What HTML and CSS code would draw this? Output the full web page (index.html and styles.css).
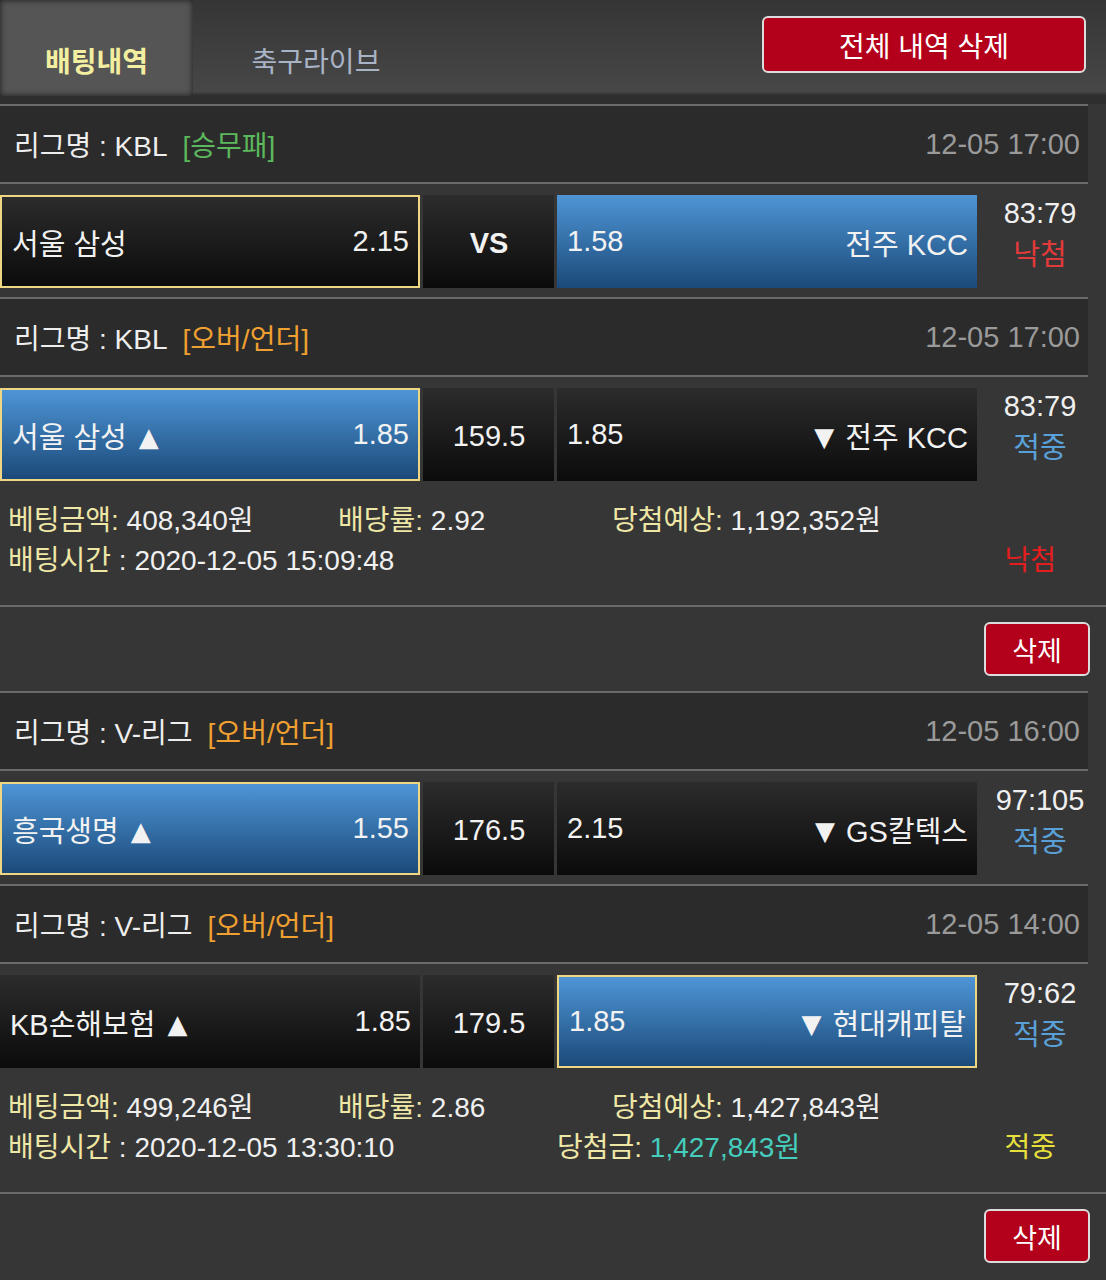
FILE: index.html
```html
<!doctype html>
<html lang="ko">
   <head>
      <meta charset="UTF-8" />
      <meta name="viewport" content="width=device-width, initial-scale=1.0" />
      <title>배팅내역</title>
      <link rel="stylesheet" href="styles.css">
   </head>
   <body>
      <div class="top">
         <div class="tabs">
            <div class="tab active">배팅내역</div>
            <div class="tab">축구라이브</div>
         </div>
         <button class="btn-all">전체 내역 삭제</button>
      </div>

      <div class="bet">
         <div class="league">
            <span>리그명 : KBL</span>
            <span class="tag green">[승무패]</span>
            <span class="time">12-05 17:00</span>
         </div>
         <div class="match">
            <div class="cell dark picked"><span>서울 삼성</span><span>2.15</span></div>
            <div class="cell dark mid vs">VS</div>
            <div class="cell blue"><span>1.58</span><span>전주 KCC</span></div>
            <div class="score"><div>83:79</div><div class="lose">낙첨</div></div>
         </div>
         <div class="league">
            <span>리그명 : KBL</span>
            <span class="tag orange">[오버/언더]</span>
            <span class="time">12-05 17:00</span>
         </div>
         <div class="match last">
            <div class="cell blue picked"><span>서울 삼성 <i class="tri up">▲</i></span><span>1.85</span></div>
            <div class="cell dark mid">159.5</div>
            <div class="cell dark"><span>1.85</span><span><i class="tri down">▼</i> 전주 KCC</span></div>
            <div class="score"><div>83:79</div><div class="win">적중</div></div>
         </div>
         <div class="info">
            <div class="info-row">
               <span class="c1"><em>베팅금액:</em> 408,340원</span>
               <span class="c2"><em>배당률:</em> 2.92</span>
               <span><em>당첨예상:</em> 1,192,352원</span>
            </div>
            <div class="info-row">
               <span class="wide"><em>배팅시간</em> : 2020-12-05 15:09:48</span>
               <span class="state red">낙첨</span>
            </div>
         </div>
         <div class="del-row"><button class="btn-del">삭제</button></div>
      </div>

      <div class="bet">
         <div class="league">
            <span>리그명 : V-리그</span>
            <span class="tag orange">[오버/언더]</span>
            <span class="time">12-05 16:00</span>
         </div>
         <div class="match">
            <div class="cell blue picked"><span>흥국생명 <i class="tri up">▲</i></span><span>1.55</span></div>
            <div class="cell dark mid">176.5</div>
            <div class="cell dark"><span>2.15</span><span><i class="tri down">▼</i> GS칼텍스</span></div>
            <div class="score"><div>97:105</div><div class="win">적중</div></div>
         </div>
         <div class="league">
            <span>리그명 : V-리그</span>
            <span class="tag orange">[오버/언더]</span>
            <span class="time">12-05 14:00</span>
         </div>
         <div class="match last">
            <div class="cell dark"><span>KB손해보험 <i class="tri up">▲</i></span><span>1.85</span></div>
            <div class="cell dark mid">179.5</div>
            <div class="cell blue picked"><span>1.85</span><span><i class="tri down">▼</i> 현대캐피탈</span></div>
            <div class="score"><div>79:62</div><div class="win">적중</div></div>
         </div>
         <div class="info">
            <div class="info-row">
               <span class="c1"><em>베팅금액:</em> 499,246원</span>
               <span class="c2"><em>배당률:</em> 2.86</span>
               <span><em>당첨예상:</em> 1,427,843원</span>
            </div>
            <div class="info-row">
               <span class="wide"><em>배팅시간</em> : 2020-12-05 13:30:10</span>
               <span><em>당첨금:</em> <span class="teal">1,427,843원</span></span>
               <span class="state yellow">적중</span>
            </div>
         </div>
         <div class="del-row"><button class="btn-del">삭제</button></div>
      </div>
   </body>
</html>
```

FILE: styles.css
```css
* {
   margin: 0;
   padding: 0;
   box-sizing: border-box;
   font-family: "Liberation Sans", "Noto Sans CJK KR", sans-serif;
}
body {
   background: #363636;
   color: #f0f0f0;
   width: 1106px;
   overflow: hidden;
}
.top {
   height: 104px;
   display: flex;
   justify-content: space-between;
   align-items: flex-start;
   padding-right: 20px;
   background: linear-gradient(#353535, #474747 88%, #2e2e2e 92%);
}
.tabs {
   display: flex;
   height: 96px;
}
.tab {
   width: 240px;
   height: 96px;
   display: flex;
   align-items: flex-end;
   justify-content: center;
   padding-bottom: 16px;
   font-size: 28px;
   color: #a9b3c6;
}
.tab.active {
   width: 193px;
   margin-right: 3px;
   background: #555;
   box-shadow: inset 0 0 6px rgba(0, 0, 0, 0.7);
   color: #f3efa0;
   font-weight: bold;
   font-size: 28px;
}
.btn-all {
   margin-top: 16px;
   width: 324px;
   height: 57px;
   background: #b3001b;
   border: 2px solid #dcdcdc;
   border-radius: 6px;
   color: #fff;
   font-size: 28px;
}
.league {
   width: 1088px;
   height: 80px;
   display: flex;
   align-items: center;
   padding: 0 8px 0 14px;
   background: #2b2b2b;
   border-top: 2px solid #6a6a6a;
   border-bottom: 2px solid #6a6a6a;
   font-size: 28px;
   color: #eee;
}
.tag {
   margin-left: 15px;
}
.green {
   color: #5cb85c;
}
.orange {
   color: #f0a030;
}
.time {
   margin-left: auto;
   color: #9a9a9a;
   font-size: 29px;
}
.match {
   display: grid;
   grid-template-columns: 420px 131px 420px 1fr;
   column-gap: 3px;
   padding: 11px 0 9px;
}
.match.last {
   padding-bottom: 0;
}
.cell {
   height: 93px;
   display: flex;
   align-items: center;
   justify-content: space-between;
   padding: 0 9px 0 10px;
   font-size: 29px;
   color: #f2f2f2;
}
.tri {
   font-style: normal;
   font-family: "DejaVu Sans", sans-serif;
   font-size: 26px;
   position: relative;
   top: -2px;
}
.tri.up {
   margin-left: 4px;
}
.tri.down {
   margin-right: 3px;
}
.dark {
   background: linear-gradient(#2c2c2c, #0b0b0b);
}
.blue {
   background: linear-gradient(#4e95d6, #1b4a79);
}
.picked {
   border: 2px solid #efd683;
}
.mid {
   justify-content: center;
   padding-top: 4px;
}
.vs {
   font-weight: bold;
}
.score {
   margin-top: -3px;
   text-align: center;
   font-size: 29px;
   line-height: 42px;
   padding-right: 6px;
}
.lose {
   color: #e23a3a;
}
.win {
   color: #5aa0d8;
}
.info {
   padding: 20px 0 24px 8px;
   border-bottom: 2px solid #6a6a6a;
   font-size: 28px;
   line-height: 40px;
}
.info-row {
   display: flex;
}
.info em {
   font-style: normal;
   color: #efe7a6;
}
.c1 {
   width: 330px;
}
.c2 {
   width: 274px;
}
.wide {
   width: 549px;
}
.teal {
   color: #45cdbd;
}
.state {
   margin-left: auto;
   padding-right: 50px;
}
.red {
   color: #e41e1e;
}
.yellow {
   color: #e6df3c;
}
.del-row {
   height: 84px;
   display: flex;
   justify-content: flex-end;
   padding: 15px 16px 0 0;
}
.btn-del {
   width: 106px;
   height: 54px;
   background: #b3001b;
   border: 2px solid #dcdcdc;
   border-radius: 6px;
   color: #fff;
   font-size: 27px;
}
```
